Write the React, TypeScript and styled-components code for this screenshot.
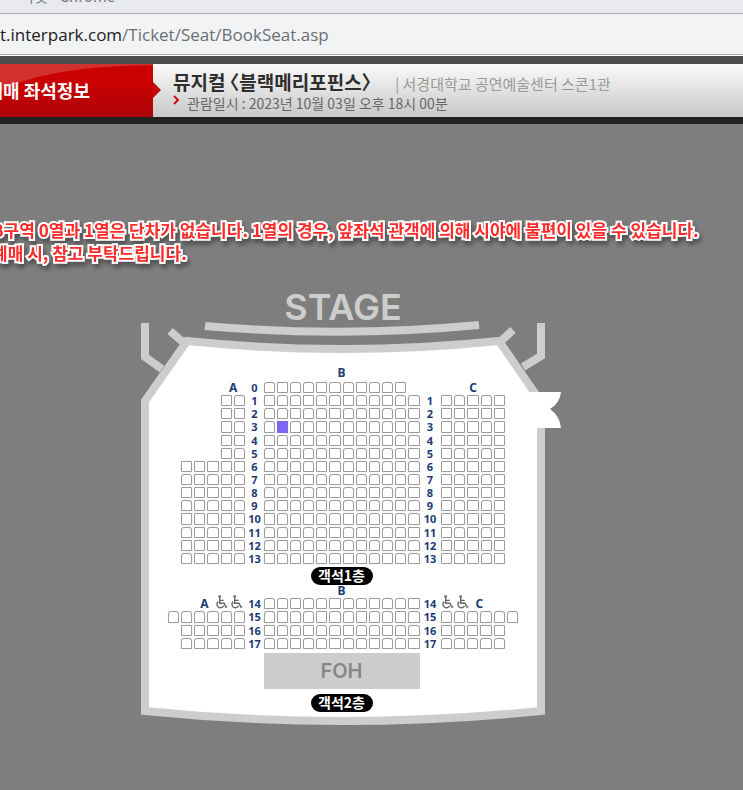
import React, { useState } from "react";
import styled, { createGlobalStyle, css } from "styled-components";

const GlobalStyle = createGlobalStyle`
  * { box-sizing: border-box; }
  body {
    margin: 0;
    background: #7e7e7e;
    font-family: "Noto Sans CJK KR", "Noto Sans", sans-serif;
    overflow-x: hidden;
  }
  h1, h2, p { margin: 0; font-weight: inherit; }
`;

const navy = "#1c3c74";
const wall = "#cdcdcd";

const TitleBar = styled.div`
  display: flex;
  align-items: flex-end;
  height: 14px;
  padding: 0 0 0 20px;
  overflow: hidden;
  background: #e8eaed;
  border-bottom: 1px solid #adadad;
  color: #777b80;
  font-size: 15px;
  line-height: 34px;
  white-space: pre;
`;

const AddressBar = styled.div`
  height: 42px;
  background: #f1f3f4;
  border-bottom: 1px solid #fff;
  box-shadow: inset 0 -1px 0 #a9a9a9;
  color: #202124;
  font-family: "Open Sans", "Noto Sans", sans-serif;
  font-size: 17px;
  line-height: 41px;
  white-space: nowrap;
  span { color: #6b6f74; }
`;

const Header = styled.header`
  display: flex;
  height: 68px;
  border-top: 8px solid #4d4d4d;
  border-bottom: 7px solid #222;
  background: linear-gradient(#fafafa, #c8c8c8);
`;

const Step = styled.div`
  display: flex;
  flex: none;
  width: 161px;
  height: 53px;
`;

const StepLabel = styled.h2`
  flex: none;
  display: flex;
  justify-content: flex-end;
  width: 153px;
  padding-right: 63px;
  overflow: hidden;
  background: linear-gradient(transparent 30%, rgba(150, 10, 20, 0.55)),
    radial-gradient(ellipse 160px 40px at 150px 41px, #cb0000 98%, #d33030 100%);
  color: #fff;
  font-size: 18px;
  font-weight: 700;
  line-height: 52px;
  white-space: nowrap;
`;

const StepArrow = styled.svg`
  flex: none;
  width: 8px;
  height: 53px;
`;

const Info = styled.div`
  padding: 5px 0 0 12px;
  white-space: nowrap;
`;

const InfoLine = styled.div`
  display: flex;
  align-items: baseline;
  height: 25px;
  line-height: 25px;
`;

const ShowTitle = styled.h1`
  color: #2e2e2e;
  font-size: 19px;
  font-weight: 700;
  font-feature-settings: "halt";
`;

const Venue = styled.span`
  margin-left: 24px;
  color: #999;
  font-size: 15px;
`;

const DateLine = styled.p`
  display: flex;
  align-items: center;
  gap: 8px;
  height: 18px;
  color: #666;
  font-size: 14px;
  line-height: 18px;
  svg { width: 6px; height: 10px; margin-bottom: 6px; }
`;

const Notice = styled.p`
  margin-top: 94px;
  margin-left: -8px;
  color: #ff2a2a;
  font-size: 17px;
  font-weight: 700;
  line-height: 23px;
  white-space: nowrap;
  -webkit-text-stroke: 4px #fff;
  paint-order: stroke fill;
  filter: drop-shadow(2px 4px 2px rgba(0, 0, 0, 0.35));
`;

const Main = styled.main`
  display: flex;
  justify-content: center;
  padding: 21px 57px 56px 0;
`;

const Plan = styled.section`
  display: grid;
  flex: none;
  width: 404px;
  > * { grid-area: 1 / 1; }
`;

const Walls = styled.svg`
  width: 404px;
  height: 445px;
  overflow: visible;
`;

const Floors = styled.div`
  display: flex;
  flex-direction: column;
  align-items: center;
`;

const Stage = styled.h2`
  height: 82px;
  color: ${wall};
  font-family: Inter, "Noto Sans", sans-serif;
  font-size: 36px;
  font-weight: 600;
  line-height: 44px;
`;

const Floor = styled.div`
  display: grid;
  grid-template-columns: 78px 18px 156px 21px 78px;
`;

const Block = styled.div<{ $cols: number; $rows: number; $height: number }>`
  display: grid;
  grid-template-columns: repeat(${(p) => p.$cols}, minmax(0, 1fr));
  grid-template-rows: repeat(${(p) => p.$rows}, minmax(0, 1fr));
  gap: 2px;
  height: ${(p) => p.$height}px;
  width: ${(p) => p.$cols * 13}px;
`;

const LeftBlock = styled(Block)`
  justify-self: end;
`;

const Numbers = styled.div<{ $rows: number; $height: number }>`
  display: grid;
  grid-template-rows: repeat(${(p) => p.$rows}, minmax(0, 1fr));
  gap: 2px;
  height: ${(p) => p.$height}px;
  color: ${navy};
  font-family: "Noto Sans", sans-serif;
  font-size: 11px;
  font-weight: 700;
  line-height: 11px;
  text-align: center;
`;

const Letter = styled.div<{ $span?: number }>`
  grid-column: span ${(p) => p.$span ?? 1};
  color: ${navy};
  font-family: "Noto Sans", sans-serif;
  font-size: 12px;
  font-weight: 700;
  line-height: 11px;
  text-align: center;
`;

const CenterLetter = styled(Letter)<{ $height: number }>`
  grid-column: 3;
  height: ${(p) => p.$height}px;
`;

const Space = styled.span<{ $span: number }>`
  grid-column: span ${(p) => p.$span};
`;

const AccessLine = styled.div<{ $end?: boolean }>`
  grid-column: 1 / -1;
  display: flex;
  align-items: center;
  justify-content: ${(p) => (p.$end ? "flex-end" : "flex-start")};
  gap: 2px;
  padding: 0 2px 0 0;
  svg { flex: none; width: 13px; height: 14px; margin-top: -4px; }
  ${Letter} { padding: 0 5px; }
`;

const Seat = styled.button<{ $round: boolean }>`
  min-width: 0;
  padding: 0;
  border: 1px solid #9c9c9c;
  border-radius: ${(p) => (p.$round ? "3px 3px 0 0" : "1px")};
  background: #fff;
  box-shadow: 0 0 1px #ccc;
  cursor: pointer;
  ${(p) =>
    p["aria-pressed"] &&
    css`
      border-color: #7b68ee;
      border-radius: 0;
      background: #7b68ee;
    `}
`;

const Badge = styled.p`
  grid-column: 3;
  justify-self: center;
  width: 62px;
  height: 18px;
  margin-top: 3px;
  border-radius: 9px;
  background: #000;
  color: #fff;
  font-size: 14px;
  font-weight: 700;
  line-height: 17px;
  text-align: center;
`;

const Booth = styled.div`
  grid-column: 3;
  height: 36px;
  margin: 4px 0 2px;
  background: ${wall};
  color: #888;
  font-family: Inter, "Noto Sans", sans-serif;
  font-size: 20px;
  font-weight: 600;
  line-height: 36px;
  text-align: center;
`;

const Wheelchair = () => (
  <svg viewBox="0 0 13 14" fill="none" stroke="#666" strokeWidth="1.4" aria-hidden="true">
    <circle cx="4.6" cy="1.6" r="1.5" fill="#777" stroke="none" />
    <path d="M4.7 3v5.2h4.4l1.8 4 1.4-.6M4.7 5.4h4" />
    <path d="M3.2 6.6a3.5 3.5 0 1 0 5.4 4.2" />
  </svg>
);

type SeatsProps = {
  area: string;
  row: number;
  cols: number[];
  selected: string;
  onSelect: (id: string) => void;
};

const isRound = (area: string, row: number, col: number) => {
  if (area === "B") return (col + row) % 3 !== 1;
  if (row > 14) return row !== 16;
  return row % 2 === 1 && col % 2 === (area === "A" ? 0 : 1);
};

const Seats = ({ area, row, cols, selected, onSelect }: SeatsProps) => (
  <>
    {cols.map((c) => {
      const id = `${area}-${row}-${c}`;
      return (
        <Seat
          key={id}
          type="button"
          aria-label={id}
          aria-pressed={selected === id}
          $round={isRound(area, row, c)}
          onClick={() => onSelect(id)}
        />
      );
    })}
  </>
);

const range = (from: number, to: number) =>
  Array.from({ length: to - from + 1 }, (_, i) => from + i);

const upper = range(0, 13);
const lower = range(14, 17);
const upperSize = { $rows: 14, $height: 182 };
const lowerSize = { $rows: 4, $height: 51 };

export default function App() {
  const [selected, setSelected] = useState("B-3-1");
  const pick = { selected, onSelect: setSelected };

  return (
    <>
      <GlobalStyle />
      <TitleBar>티켓 - Chrome</TitleBar>
      <AddressBar>
        t.interpark.com<span>/Ticket/Seat/BookSeat.asp</span>
      </AddressBar>
      <Header>
        <Step>
          <StepLabel>예매 좌석정보</StepLabel>
          <StepArrow viewBox="0 0 8 53" aria-hidden="true">
            <path d="M0 18l8 8-8 8z" fill="#c00a0c" />
          </StepArrow>
        </Step>
        <Info>
          <InfoLine>
            <ShowTitle>뮤지컬 〈블랙메리포핀스〉</ShowTitle>
            <Venue>| 서경대학교 공연예술센터 스콘1관</Venue>
          </InfoLine>
          <DateLine>
            <svg viewBox="0 0 6 10" fill="none" stroke="#c8101a" strokeWidth="2" aria-hidden="true">
              <path d="M1 1l4 4-4 4" />
            </svg>
            관람일시 : 2023년 10월 03일 오후 18시 00분
          </DateLine>
        </Info>
      </Header>
      <Notice>
        B구역 0열과 1열은 단차가 없습니다. 1열의 경우, 앞좌석 관객에 의해 시야에 불편이 있을 수 있습니다.
        <br />
        예매 시, 참고 부탁드립니다.
      </Notice>
      <Main>
        <Plan>
          <Walls viewBox="141 285 404 445" aria-hidden="true">
            <path
              d="M187 341Q343 357 499 341L541 402V711Q343 731 145 711V401Z"
              fill="#fff"
              stroke={wall}
              strokeWidth="8"
            />
            <path
              d="M205 326Q342 338 479 325M145 323V357L162 369M170 331L183 342M541 323V356L523 367M513 330L501 341"
              fill="none"
              stroke={wall}
              strokeWidth="8"
            />
            <path d="M528 392H561Q560 403 550 409Q560 416 561 428H528Z" fill="#fff" />
          </Walls>
          <Floors>
            <Stage>STAGE</Stage>
            <Floor>
              <CenterLetter $height={15}>B</CenterLetter>
            </Floor>
            <Floor>
              <LeftBlock $cols={5} {...upperSize}>
                <Space $span={3} />
                <Letter $span={2}>A</Letter>
                {range(1, 13).map((r) => (
                  <React.Fragment key={r}>
                    {r < 6 && <Space $span={3} />}
                    <Seats area="A" row={r} cols={range(r < 6 ? 3 : 0, 4)} {...pick} />
                  </React.Fragment>
                ))}
              </LeftBlock>
              <Numbers {...upperSize}>
                {upper.map((r) => <span key={r}>{r}</span>)}
              </Numbers>
              <Block $cols={12} {...upperSize}>
                {upper.map((r) => (
                  <React.Fragment key={r}>
                    <Seats area="B" row={r} cols={range(0, r === 0 ? 10 : 11)} {...pick} />
                    {r === 0 && <Space $span={1} />}
                  </React.Fragment>
                ))}
              </Block>
              <Numbers {...upperSize}>
                {upper.map((r) => <span key={r}>{r > 0 ? r : null}</span>)}
              </Numbers>
              <Block $cols={5} {...upperSize}>
                <Letter $span={5}>C</Letter>
                {range(1, 13).map((r) => (
                  <Seats key={r} area="C" row={r} cols={range(0, 4)} {...pick} />
                ))}
              </Block>
              <Badge>객석1층</Badge>
              <CenterLetter $height={13}>B</CenterLetter>
            </Floor>
            <Floor>
              <LeftBlock $cols={6} {...lowerSize}>
                <AccessLine $end>
                  <Letter>A</Letter>
                  <Wheelchair />
                  <Wheelchair />
                </AccessLine>
                <Seats area="A" row={15} cols={range(0, 5)} {...pick} />
                {[16, 17].map((r) => (
                  <React.Fragment key={r}>
                    <Space $span={1} />
                    <Seats area="A" row={r} cols={range(1, 5)} {...pick} />
                  </React.Fragment>
                ))}
              </LeftBlock>
              <Numbers {...lowerSize}>
                {lower.map((r) => <span key={r}>{r}</span>)}
              </Numbers>
              <Block $cols={12} {...lowerSize}>
                {lower.map((r) => (
                  <Seats key={r} area="B" row={r} cols={range(0, 11)} {...pick} />
                ))}
              </Block>
              <Numbers {...lowerSize}>
                {lower.map((r) => <span key={r}>{r}</span>)}
              </Numbers>
              <Block $cols={6} {...lowerSize}>
                <AccessLine>
                  <Wheelchair />
                  <Wheelchair />
                  <Letter>C</Letter>
                </AccessLine>
                <Seats area="C" row={15} cols={range(0, 5)} {...pick} />
                {[16, 17].map((r) => (
                  <React.Fragment key={r}>
                    <Seats area="C" row={r} cols={range(0, 4)} {...pick} />
                    <Space $span={1} />
                  </React.Fragment>
                ))}
              </Block>
              <Booth>FOH</Booth>
              <Badge>객석2층</Badge>
            </Floor>
          </Floors>
        </Plan>
      </Main>
    </>
  );
}
